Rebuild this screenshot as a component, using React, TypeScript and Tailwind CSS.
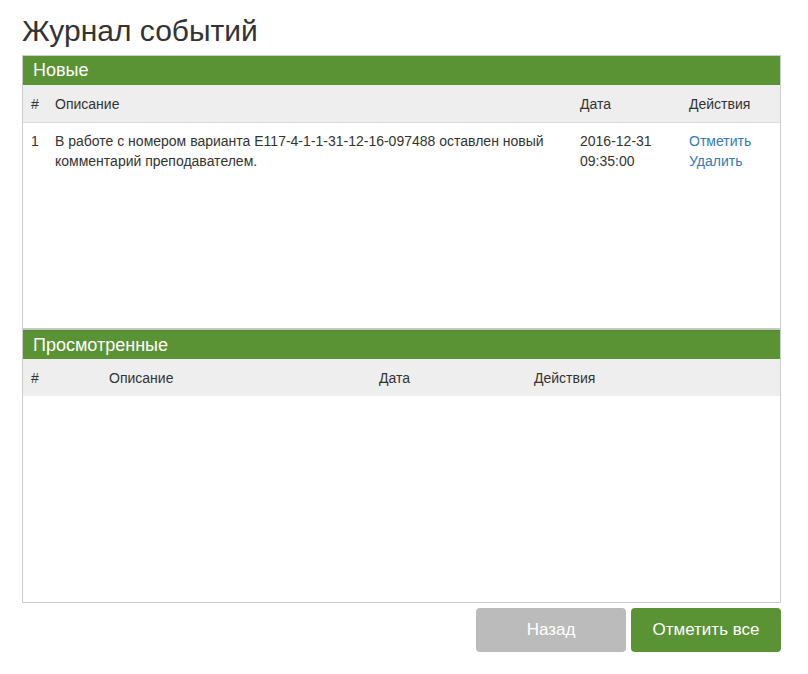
const font = { fontFamily: '"Liberation Sans", Arial, sans-serif' }

export default function App() {
  return (
    <div className="min-h-[674px] bg-white text-[#333] text-[14px] leading-5" style={font}>
      <div className="pl-[22px] pr-[27px] pt-[14px]">
        <h1 className="text-[30px] leading-[33px] font-normal mb-2">Журнал событий</h1>

        <div className="border border-[#ccc] h-[548px] flex flex-col">
          <section className="h-[274px] border-b-2 border-[#c8c8c8] flex flex-col">
            <div className="h-[29px] bg-[#5a9334] text-white text-[18px] leading-[29px] px-[10px]">Новые</div>
            <table className="w-full table-fixed border-collapse">
              <colgroup>
                <col className="w-[24px]" />
                <col className="w-[525px]" />
                <col className="w-[109px]" />
                <col />
              </colgroup>
              <thead>
                <tr className="bg-[#eeeeee] border-b border-[#dddddd] h-[37px]">
                  <th className="font-normal text-left px-2 pt-[9px] pb-2">#</th>
                  <th className="font-normal text-left px-2 pt-[9px] pb-2">Описание</th>
                  <th className="font-normal text-left px-2 pt-[9px] pb-2">Дата</th>
                  <th className="font-normal text-left px-2 pt-[9px] pb-2">Действия</th>
                </tr>
              </thead>
              <tbody>
                <tr className="align-top">
                  <td className="px-2 py-2">1</td>
                  <td className="px-2 py-2">
                    В работе с номером варианта E117-4-1-1-31-12-16-097488 оставлен новый
                    <br />
                    комментарий преподавателем.
                  </td>
                  <td className="px-2 py-2">
                    2016-12-31
                    <br />
                    09:35:00
                  </td>
                  <td className="px-2 py-2">
                    <a className="text-[#337ab7] block">Отметить</a>
                    <a className="text-[#337ab7] block">Удалить</a>
                  </td>
                </tr>
              </tbody>
            </table>
          </section>

          <section className="flex-1 flex flex-col">
            <div className="h-[29px] bg-[#5a9334] border-t border-[#4f8a2c] text-white text-[18px] leading-[28px] px-[10px]">
              Просмотренные
            </div>
            <table className="w-full table-fixed border-collapse">
              <colgroup>
                <col className="w-[78px]" />
                <col className="w-[270px]" />
                <col className="w-[155px]" />
                <col />
              </colgroup>
              <thead>
                <tr className="bg-[#eeeeee] h-[37px]">
                  <th className="font-normal text-left px-2 pt-[9px] pb-2">#</th>
                  <th className="font-normal text-left px-2 pt-[9px] pb-2">Описание</th>
                  <th className="font-normal text-left px-2 pt-[9px] pb-2">Дата</th>
                  <th className="font-normal text-left px-2 pt-[9px] pb-2">Действия</th>
                </tr>
              </thead>
              <tbody />
            </table>
          </section>
        </div>

        <div className="flex justify-end gap-[5px] mt-[5px]">
          <button className="w-[150px] h-[44px] rounded bg-[#bbbbbb] text-white text-[17px]">Назад</button>
          <button className="w-[150px] h-[44px] rounded bg-[#5a9334] text-white text-[17px]">Отметить все</button>
        </div>
      </div>
    </div>
  )
}
